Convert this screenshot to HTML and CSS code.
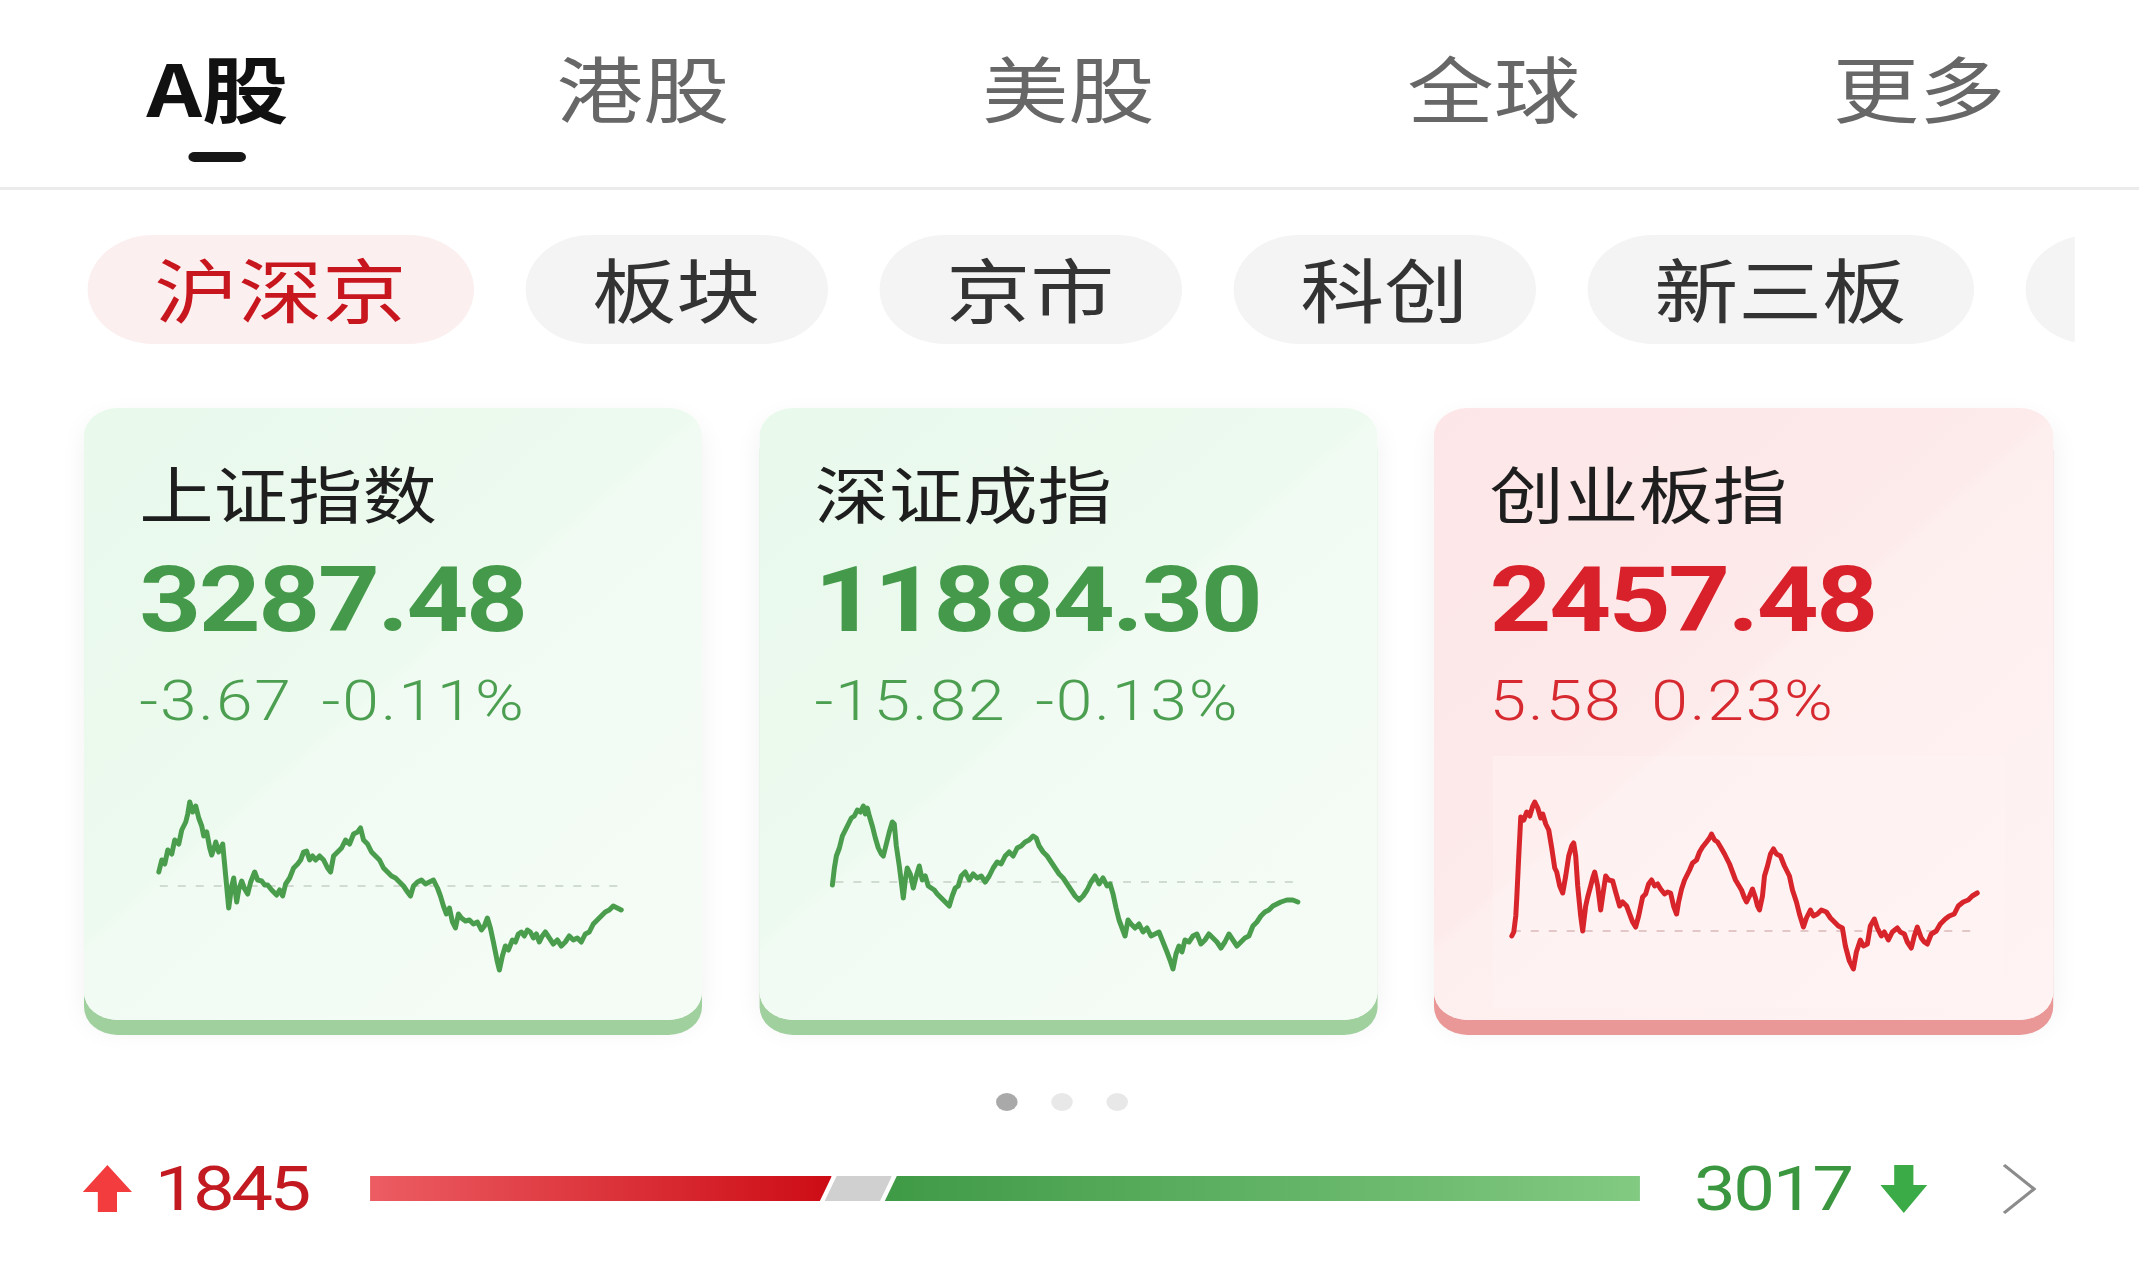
FILE: index.html
```html
<!DOCTYPE html>
<html lang="zh-CN">
<head>
<meta charset="utf-8">
<title>A股行情</title>
<link rel="stylesheet" href="styles.css">
</head>
<body>
<div class="page">
  <nav class="tabs">
    <div class="tab active"><span class="tab-label">A股</span><i class="tab-bar"></i></div>
    <div class="tab"><span class="tab-label">港股</span></div>
    <div class="tab"><span class="tab-label">美股</span></div>
    <div class="tab"><span class="tab-label">全球</span></div>
    <div class="tab"><span class="tab-label">更多</span></div>
  </nav>

  <div class="chips">
    <span class="chip active">沪深京</span>
    <span class="chip">板块</span>
    <span class="chip">京市</span>
    <span class="chip">科创</span>
    <span class="chip">新三板</span>
    <span class="chip chip-peek"></span>
  </div>

  <div class="cards">
    <div class="card down">
      <div class="card-title">上证指数</div>
      <div class="card-price">3287.48</div>
      <div class="card-change"><span>-3.67</span><span class="pct">-0.11%</span></div>
      <div class="chart">
        <svg viewBox="5 0 513 252" preserveAspectRatio="none">
          <line class="base g" x1="22" y1="130" x2="484" y2="130"/>
          <polyline class="line g" points="21,116 24,104 27,108 30,94 34,98 37,84 41,88 44,74 48,66 50,58 52,46 55,56 58,50 61,62 64,70 66,80 69,76 72,92 74,99 77,90 78,86 81,96 85,88 88,120 91,152 94,130 96,122 99,146 101,134 104,125 107,133 110,138 113,126 117,116 120,124 124,125 127,129 130,129 134,134 139,139 142,134 145,140 148,128 152,122 156,112 160,108 163,104 166,96 169,95 172,104 175,100 178,104 182,100 186,104 190,112 193,116 196,100 200,96 204,92 208,84 212,88 216,78 220,76 223,72 226,84 230,88 234,96 238,100 242,104 246,112 250,116 254,120 258,122 262,126 266,130 270,136 273,140 276,130 280,126 284,124 288,128 292,126 296,124 300,132 303,140 306,150 309,158 312,152 315,166 318,172 321,158 324,162 328,165 332,164 336,168 340,166 344,174 347,170 350,162 353,172 356,186 358,196 360,206 362,214 365,200 368,190 371,194 375,184 378,186 381,178 384,176 387,180 390,174 393,176 396,182 399,178 402,186 405,180 408,176 412,182 416,188 420,184 424,190 428,186 432,180 436,184 440,182 444,186 448,178 452,176 456,168 460,164 464,160 468,156 472,154 476,150 480,152 484,154"/>
        </svg>
      </div>
    </div>

    <div class="card down">
      <div class="card-title">深证成指</div>
      <div class="card-price">11884.30</div>
      <div class="card-change"><span>-15.82</span><span class="pct">-0.13%</span></div>
      <div class="chart">
        <svg viewBox="3 0 513 252" preserveAspectRatio="none">
          <line class="base g" x1="20" y1="126" x2="483" y2="126"/>
          <polyline class="line g" points="17,129 19,112 21,100 24,92 27,80 30,74 33,68 36,62 39,60 42,54 45,56 48,50 50,58 52,52 54,60 57,70 60,82 63,92 66,98 68,100 71,88 74,76 77,66 79,68 81,90 84,110 86,126 88,142 90,124 92,112 95,118 98,132 101,120 104,110 107,124 110,120 113,130 116,132 119,134 122,138 126,142 130,146 134,150 137,140 140,132 143,130 146,120 150,116 154,124 158,118 162,122 166,120 170,126 174,120 178,112 182,106 186,108 190,100 194,96 198,100 202,92 206,90 210,86 214,84 218,80 221,82 224,90 228,96 232,100 236,106 240,112 244,118 248,122 252,128 256,134 260,140 264,144 268,140 272,134 276,126 280,120 284,128 288,122 292,130 295,128 298,138 301,152 304,164 307,172 310,180 313,164 316,168 320,172 324,168 328,176 332,172 336,180 340,178 344,176 348,186 352,196 355,204 358,213 361,198 364,190 367,196 370,184 374,186 378,180 382,178 386,188 390,184 394,178 398,182 402,186 406,192 410,186 414,178 418,184 422,190 426,186 430,182 434,180 438,170 442,166 446,160 450,156 454,154 458,150 462,148 466,146 472,144 478,144 483,146"/>
        </svg>
      </div>
    </div>

    <div class="card up">
      <div class="card-title">创业板指</div>
      <div class="card-price">2457.48</div>
      <div class="card-change"><span>5.58</span><span class="pct">0.23%</span></div>
      <div class="chart">
        <svg viewBox="0 0 513 252" preserveAspectRatio="none">
          <line class="base r" x1="20" y1="175" x2="483" y2="175"/>
          <polyline class="line r" points="19,180 21,176 23,160 24,142 26,100 28,61 31,64 34,56 37,60 40,50 42,46 45,52 48,62 50,58 53,68 56,74 59,92 62,112 64,116 67,130 70,137 73,120 76,100 79,90 81,87 83,100 85,130 88,160 90,175 93,150 95,141 98,130 100,122 102,116 105,130 108,154 110,140 113,120 116,124 120,125 123,136 127,150 130,146 134,150 137,158 140,166 143,171 146,160 150,141 153,138 156,128 159,124 162,130 165,128 168,133 172,138 175,136 178,137 181,150 184,158 186,146 189,133 192,124 194,120 197,114 200,107 204,104 207,96 210,91 214,86 217,82 219,78 222,84 225,86 228,91 232,98 235,104 237,108 240,116 243,124 246,129 249,134 252,142 254,146 257,140 260,133 263,142 265,150 267,154 270,140 272,120 275,110 278,98 281,93 284,98 288,100 292,110 297,120 300,134 304,146 307,158 311,171 314,162 318,154 321,160 325,158 329,154 334,156 338,162 343,167 346,170 350,172 353,190 357,205 361,213 364,196 368,184 371,190 375,188 378,170 382,163 385,172 389,180 392,176 396,184 400,176 405,172 408,176 412,178 415,186 419,192 422,180 425,171 429,182 432,186 435,188 439,178 444,175 448,168 453,163 457,160 462,158 466,150 471,146 476,144 480,140 485,137"/>
        </svg>
      </div>
    </div>
  </div>

  <div class="dots"><i class="dot on"></i><i class="dot"></i><i class="dot"></i></div>

  <div class="breadth">
    <svg class="arrow-up" viewBox="0 0 41 47"><path d="M20.5 0 L41 27 H28.5 V47 H12.5 V27 H0 Z"/></svg>
    <span class="count up">1845</span>
    <div class="bar">
      <i class="seg rise" style="flex-grow:1845"></i>
      <i class="seg flat" style="flex-grow:269"></i>
      <i class="seg fall" style="flex-grow:3017"></i>
    </div>
    <span class="count down">3017</span>
    <svg class="arrow-down" viewBox="0 0 39 48"><path d="M11.5 0 H27.5 V20 H39 L19.5 48 L0 20 H11.5 Z"/></svg>
    <svg class="chevron" viewBox="0 0 29 52"><polyline points="2,2 27,26 2,50"/></svg>
  </div>
</div>
</body>
</html>
```

FILE: styles.css
```css
html, body {
  margin: 0;
  padding: 0;
  background: #ffffff;
  overflow: hidden;
}

body {
  width: 2139px;
  height: 1280px;
  font-family: "Noto Sans CJK SC", "Noto Sans", sans-serif;
}

/* the screenshot is horizontally stretched; lay out in a narrower frame */
.page {
  width: 1782.5px;
  transform: scaleX(1.2);
  transform-origin: 0 0;
}

/* top tabs */
.tabs {
  display: flex;
  height: 187px;
  padding: 0 6px 0 4px;
  border-bottom: 3px solid #ebebeb;
}

.tab {
  flex: 1;
  display: flex;
  flex-direction: column;
  align-items: center;
  padding-top: 43px;
}

.tab-label {
  font-size: 72px;
  line-height: 86px;
  color: #676767;
}

.tab.active .tab-label {
  color: #111111;
  font-weight: 700;
}

.tab-bar {
  display: block;
  width: 48px;
  height: 10px;
  border-radius: 5px;
  background: #161616;
  margin-top: 23px;
}

/* chips */
.chips {
  display: flex;
  gap: 43px;
  margin: 45px 53.5px 0 0;
  padding-left: 72.5px;
  overflow: hidden;
}

.chip {
  flex-shrink: 0;
  height: 109px;
  line-height: 106px;
  padding: 0 56px;
  border-radius: 55px;
  background: #f4f4f4;
  color: #333333;
  font-size: 70px;
  white-space: nowrap;
}

.chip.active {
  background: #fcefef;
  color: #c8161e;
}

.chip-peek {
  width: 140px;
}

/* index cards */
.cards {
  display: grid;
  grid-template-columns: repeat(3, 1fr);
  gap: 47.5px;
  margin-top: 64px;
  padding: 0 72px 0 70px;
}

.card {
  border-radius: 28px;
  padding: 47px 0 12px 46px;
}

.card.down {
  background: linear-gradient(134deg, #e9f9ec 0%, #edfaef 46%, #f1fbf3 48%, #f5fcf6 100%);
  box-shadow: 0 15px 0 #9fd09e, 0 10px 24px rgba(0, 0, 0, 0.06);
}

.card.up {
  background: linear-gradient(134deg, #fde6e7 0%, #fdeaea 46%, #feefef 48%, #fff3f3 100%);
  box-shadow: 0 15px 0 #e99797, 0 10px 24px rgba(0, 0, 0, 0.06);
}

.card-title {
  font-size: 62px;
  line-height: 74px;
  color: #1e1e1e;
}

.card-price {
  font-family: Roboto, "Noto Sans", sans-serif;
  font-weight: 700;
  font-size: 90px;
  line-height: 100px;
  letter-spacing: -2px;
  margin-top: 21.5px;
}

.card-change {
  display: flex;
  font-family: Roboto, "Noto Sans", sans-serif;
  font-weight: 300;
  font-size: 55px;
  line-height: 64px;
  letter-spacing: 1.5px;
  margin-top: 18.5px;
}

.card-change .pct {
  margin-left: 24px;
}

.card.down .card-price { color: #45994a; }
.card.down .card-change { color: #4c9f50; }
.card.up .card-price { color: #d8212a; }
.card.up .card-change { color: #d62a30; }

.chart {
  width: 427px;
  height: 252px;
  margin: 23px 0 0 3px;
}

.card.up .chart {
  background: rgba(255, 244, 244, 0.45);
}

.chart svg {
  display: block;
  width: 100%;
  height: 100%;
}

.line {
  fill: none;
  stroke-width: 5;
  stroke-linejoin: round;
  stroke-linecap: round;
}

.line.g { stroke: #4a9d4c; }
.line.r { stroke: #d7252b; }

.base {
  stroke-width: 2;
  stroke-dasharray: 8 10;
}

.base.g { stroke: #cfdccf; }
.base.r { stroke: #e3c6c6; }

/* pager dots */
.dots {
  display: flex;
  justify-content: center;
  gap: 28px;
  margin-top: 73px;
  padding-right: 13px;
}

.dot {
  display: block;
  width: 18px;
  height: 18px;
  border-radius: 50%;
  background: #e8e8e8;
}

.dot.on {
  background: #a9a9a9;
}

/* advance / decline row */
.breadth {
  display: flex;
  align-items: center;
  height: 60px;
  margin-top: 47.5px;
  padding: 0 85.5px 0 69px;
}

.arrow-up {
  flex-shrink: 0;
  width: 41px;
  height: 47px;
  fill: #f23c3e;
}

.count {
  font-family: Roboto, "Noto Sans", sans-serif;
  font-weight: 400;
  font-size: 62px;
  line-height: 60px;
  white-space: nowrap;
}

.count.up {
  color: #c21a20;
  margin-left: 19px;
  letter-spacing: -3px;
}

.count.down {
  color: #3b973f;
  letter-spacing: -2px;
}

.bar {
  flex: 1;
  display: flex;
  height: 25px;
  margin: 0 45px 0 52px;
}

.seg {
  display: block;
  height: 100%;
  flex-basis: 0;
}

.seg.rise {
  background: linear-gradient(90deg, #ec5d63, #cd0c15);
  clip-path: polygon(0 0, 100% 0, calc(100% - 10px) 100%, 0 100%);
}

.seg.flat {
  background: #d0d0d0;
  margin-left: -6px;
  clip-path: polygon(10px 0, 100% 0, calc(100% - 10px) 100%, 0 100%);
}

.seg.fall {
  background: linear-gradient(90deg, #3f9a46, #82ca82);
  margin-left: -6px;
  clip-path: polygon(10px 0, 100% 0, 100% 100%, 0 100%);
}

.arrow-down {
  flex-shrink: 0;
  width: 39px;
  height: 48px;
  margin-left: 24px;
  fill: #3aab46;
}

.chevron {
  flex-shrink: 0;
  width: 29px;
  height: 52px;
  margin-left: 62px;
  fill: none;
  stroke: #8c8c8c;
  stroke-width: 3;
}
```
